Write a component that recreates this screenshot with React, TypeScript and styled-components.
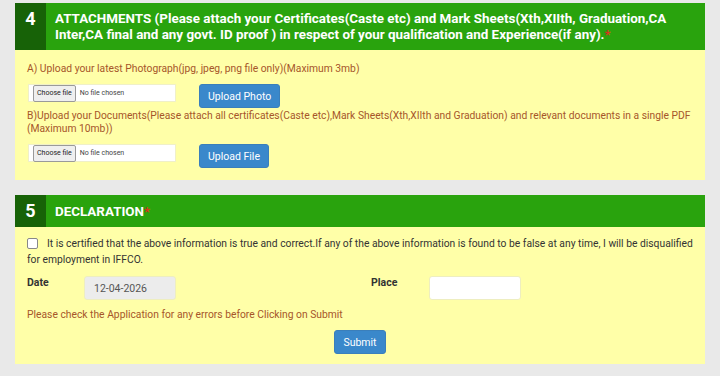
import styled, { createGlobalStyle } from "styled-components";

const GlobalStyle = createGlobalStyle`
  html, body {
    margin: 0;
    padding: 0;
    background: #e9e9e9;
    font-family: Roboto, "Liberation Sans", Arial, sans-serif;
  }
  * { box-sizing: border-box; }
`;

const Page = styled.div`
  width: 720px;
  height: 376px;
  overflow: hidden;
  padding: 3px 15px 0 15px;
  display: flex;
  flex-direction: column;
  gap: 15px;
`;

const Section = styled.section`
  display: flex;
  flex-direction: column;
`;

const Header = styled.div<{ $h: number }>`
  display: flex;
  background: #29a30d;
  height: ${(p) => p.$h}px;
`;

const Num = styled.div`
  width: 31px;
  flex: none;
  background: #176207;
  color: #fff;
  font-weight: 700;
  font-size: 18px;
  display: flex;
  justify-content: center;
  padding-top: 5px;
`;

const Title = styled.div<{ $top: number }>`
  color: #fff;
  font-weight: 700;
  font-size: 13.4px;
  line-height: 16px;
  padding: ${(p) => p.$top}px 20px 0 9px;
`;

const Star = styled.span`
  color: #d9321c;
`;

const Body = styled.div<{ $pad: string }>`
  background: #ffffa8;
  padding: ${(p) => p.$pad};
  color: #a6562a;
  font-size: 10.3px;
  line-height: 13px;
`;

const Note = styled.p`
  margin: 0;
`;

const UploadRow = styled.div`
  display: flex;
  align-items: flex-start;
  gap: 23px;
  margin: 9px 0 1px 1px;
`;

const FileBox = styled.div`
  width: 148px;
  height: 18px;
  background: #fff;
  border: 1px solid #f0f0c8;
  display: flex;
  align-items: center;
  padding-left: 4px;
  gap: 4px;
  font-size: 7px;
  color: #444;
`;

const ChooseBtn = styled.span`
  background: #efefef;
  border: 1px solid #9a9a9a;
  border-radius: 2px;
  padding: 1px 3px;
  color: #222;
`;

const BlueBtn = styled.button`
  background: #3a88cb;
  border: 1px solid #3a7fbb;
  border-radius: 3px;
  color: #fff;
  font-family: inherit;
  font-size: 10.5px;
  height: 24px;
  padding: 0 8px;
  cursor: pointer;
`;

const Check = styled.span`
  display: inline-block;
  width: 11px;
  height: 11px;
  border: 1px solid #888;
  border-radius: 2px;
  background: #fff;
  vertical-align: -2px;
  margin-right: 9px;
`;

const Declare = styled.p`
  margin: 0;
  color: #333;
  font-size: 10.3px;
  line-height: 16px;
`;

const FieldRow = styled.div`
  display: flex;
  align-items: flex-start;
  margin-top: 8px;
`;

const Label = styled.span<{ $w: number }>`
  width: ${(p) => p.$w}px;
  flex: none;
  color: #333;
  font-weight: 700;
  font-size: 10.5px;
`;

const TextBox = styled.div<{ $grey?: boolean }>`
  width: 92px;
  height: 24px;
  border: 1px solid #eeeec0;
  border-radius: 3px;
  background: ${(p) => (p.$grey ? "#ececec" : "#fff")};
  color: #555;
  font-size: 10.5px;
  display: flex;
  align-items: center;
  padding-left: 9px;
`;

const Gap = styled.div<{ $w: number }>`
  width: ${(p) => p.$w}px;
  flex: none;
`;

const Warn = styled.p`
  margin: 8px 0 0 0;
  color: #a6562a;
  font-size: 10.3px;
  line-height: 13px;
`;

const SubmitRow = styled.div`
  display: flex;
  justify-content: center;
  margin-top: 9px;
`;

export default function App() {
  return (
    <>
      <GlobalStyle />
      <Page>
        <Section>
          <Header $h={47}>
            <Num>4</Num>
            <Title $top={8}>
              ATTACHMENTS (Please attach your Certificates(Caste etc) and Mark Sheets(Xth,XIIth, Graduation,CA
              <br />
              Inter,CA final and any govt. ID proof ) in respect of your qualification and Experience(if any).
              <Star>*</Star>
            </Title>
          </Header>
          <Body $pad="12px 12px 11px 12px">
            <Note>A) Upload your latest Photograph(jpg, jpeg, png file only)(Maximum 3mb)</Note>
            <UploadRow>
              <FileBox>
                <ChooseBtn>Choose file</ChooseBtn>No file chosen
              </FileBox>
              <BlueBtn>Upload Photo</BlueBtn>
            </UploadRow>
            <Note>
              B)Upload your Documents(Please attach all certificates(Caste etc),Mark Sheets(Xth,XIIth and Graduation) and relevant documents in a single PDF (Maximum 10mb))
            </Note>
            <UploadRow>
              <FileBox>
                <ChooseBtn>Choose file</ChooseBtn>No file chosen
              </FileBox>
              <BlueBtn>Upload File</BlueBtn>
            </UploadRow>
          </Body>
        </Section>
        <Section>
          <Header $h={32}>
            <Num>5</Num>
            <Title $top={9}>
              DECLARATION<Star>*</Star>
            </Title>
          </Header>
          <Body $pad="9px 12px 10px 12px">
            <Declare>
              <Check />
              It is certified that the above information is true and correct.If any of the above information is found to be false at any time, I will be disqualified for employment in IFFCO.
            </Declare>
            <FieldRow>
              <Label $w={57}>Date</Label>
              <TextBox $grey>12-04-2026</TextBox>
              <Gap $w={195} />
              <Label $w={58}>Place</Label>
              <TextBox />
            </FieldRow>
            <Warn>Please check the Application for any errors before Clicking on Submit</Warn>
            <SubmitRow>
              <BlueBtn>Submit</BlueBtn>
            </SubmitRow>
          </Body>
        </Section>
      </Page>
    </>
  );
}
